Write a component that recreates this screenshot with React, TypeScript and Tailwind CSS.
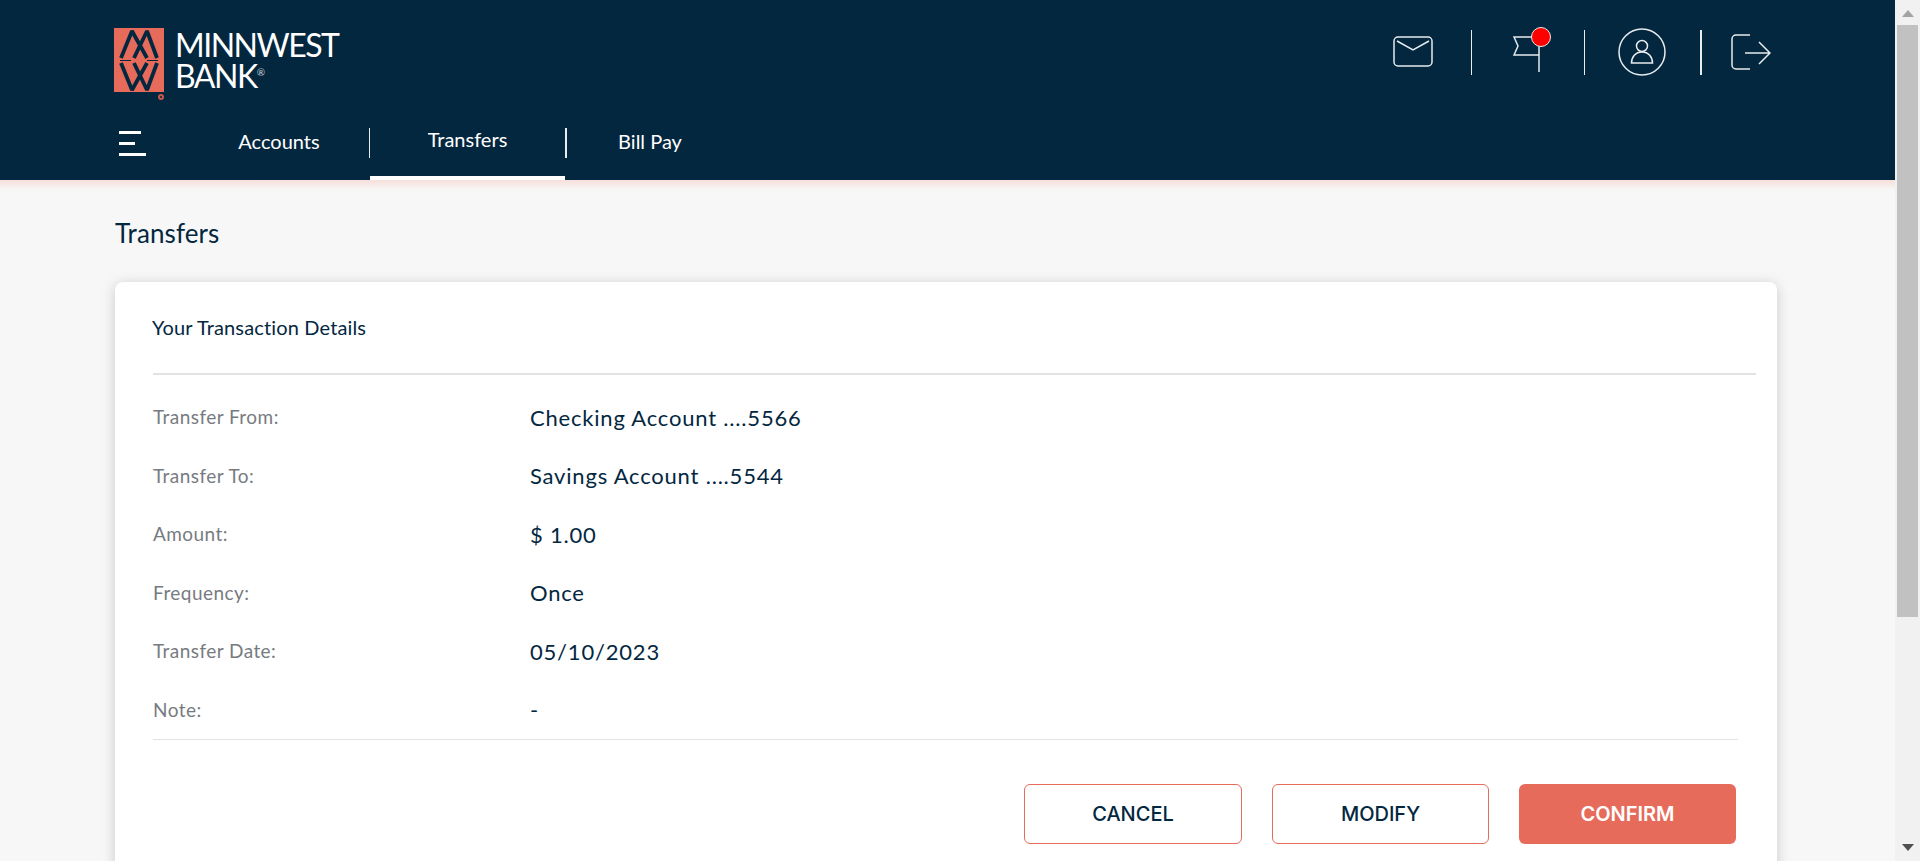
const rows = [
  { label: 'Transfer From:', value: 'Checking Account ....5566' },
  { label: 'Transfer To:', value: 'Savings Account ....5544' },
  { label: 'Amount:', value: '$ 1.00' },
  { label: 'Frequency:', value: 'Once' },
  { label: 'Transfer Date:', value: '05/10/2023' },
  { label: 'Note:', value: '-' },
];

function Logo() {
  return (
    <div className="flex items-start">
      <div className="relative h-16 w-[50px] bg-[#e66b5b]">
        <svg viewBox="0 0 50 64" className="h-16 w-[50px]" fill="none" stroke="#03273f" strokeWidth="3.8" strokeLinejoin="bevel">
          <path d="M7 30 18 3l15 27M43 30 33 3 20 30" />
          <path d="M7 35 18 62l15-27M43 35 33 62 20 35" />
          <path d="M6 32.500h11M33 32.500h11" strokeWidth="1.2" />
        </svg>
        <span className="absolute top-[66px] left-[44px] h-[6px] w-[6px] rounded-full border-2 border-[#c9564a]" />
      </div>
      <div className="ml-[11px] mt-[1px] font-['Lato',sans-serif] text-[32px] leading-[31px] font-normal tracking-[-1.5px] text-white">
        <div>MINNWEST</div>
        <div className="flex items-start">
          BANK
          <span className="text-[10px] leading-[24px] tracking-normal text-[#c9d2d8]">®</span>
        </div>
      </div>
    </div>
  );
}

function TopIcons() {
  return (
    <div className="flex items-center">
      <svg width="41" height="32" viewBox="0 0 41 32" fill="none" stroke="#e8ecee" strokeWidth="1.5">
        <rect x="1" y="1" width="38" height="29" rx="4" />
        <path d="M4 5l16 9 16-9" />
      </svg>
      <div className="ml-[37px] h-[45px] w-px bg-[#e8ecee]" />
      <div className="relative ml-[41px] h-[50px] w-[30px]">
        <svg width="30" height="50" viewBox="0 0 30 50" fill="none" stroke="#e8ecee" strokeWidth="1.5">
          <path d="M26 10H1l4 9-4 9h25M26 10v35" />
        </svg>
        <span className="absolute top-0 left-[18px] h-5 w-5 rounded-full border border-[#e8ecee] bg-[#ff0000]" />
      </div>
      <div className="ml-[41px] h-[45px] w-px bg-[#e8ecee]" />
      <svg className="ml-[33px]" width="48" height="48" viewBox="0 0 48 48" fill="none" stroke="#e8ecee" strokeWidth="1.5">
        <circle cx="24" cy="24" r="23" />
        <circle cx="24" cy="18" r="5.5" />
        <path d="M13.500 35c0-6 4-11 10.500-11s10.500 5 10.500 11z" />
      </svg>
      <div className="ml-[34px] h-[45px] w-[2px] bg-[#e8ecee]" />
      <svg className="ml-[29px]" width="40" height="36" viewBox="0 0 40 36" fill="none" stroke="#e8ecee" strokeWidth="1.5">
        <path d="M19 1H5a4 4 0 0 0-4 4v26a4 4 0 0 0 4 4h14" />
        <path d="M14 19h25M28 8l11 11-11 11" />
      </svg>
    </div>
  );
}

function Header() {
  return (
    <header className="flex h-[180px] flex-col bg-[#03273f] text-white">
      <div className="flex h-[107px] items-start justify-between pt-7 pr-[124px] pl-[114px]">
        <Logo />
        <div className="-mt-[1px]">
          <TopIcons />
        </div>
      </div>
      <nav className="flex h-[73px] text-[20px] leading-none">
        <div className="ml-[119px] flex w-[70px] flex-col gap-2 pt-6">
          <span className="h-[3px] w-[22px] bg-white" />
          <span className="h-[3px] w-4 bg-white" />
          <span className="h-[3px] w-[27px] bg-white" />
        </div>
        <div className="flex h-[73px] w-[180px] items-center justify-center pb-[5px]">Accounts</div>
        <div className="mt-[21px] h-[30px] w-px bg-[#e8ecee]" />
        <div className="flex h-[73px] w-[195px] items-center justify-center border-b-4 border-white pb-[6px]">Transfers</div>
        <div className="mt-[21px] h-[30px] w-[2px] bg-[#e8ecee]" />
        <div className="flex h-[73px] w-[166px] items-center justify-center pb-[5px]">Bill Pay</div>
      </nav>
    </header>
  );
}

function Details() {
  return (
    <section className="ml-[115px] mt-[34px] w-[1662px] rounded-lg bg-white pt-[33px] pb-10 pl-[37px] shadow-[0_2px_14px_rgba(0,0,0,0.18)]">
      <h2 className="text-[20px] leading-6 tracking-[0.15px] text-[#03273f]">Your Transaction Details</h2>
      <div className="ml-px mt-[34px] h-[2px] w-[1603px] bg-[#e2e2e2]" />
      <dl className="ml-px mt-[13px] w-[1585px] border-b border-[#e2e2e2]">
        {rows.map((row) => (
          <div key={row.label} className="flex h-[58.5px] items-center">
            <dt className="w-[377px] text-[19px] tracking-[0.45px] text-[#777b80]">{row.label}</dt>
            <dd className="text-[22px] tracking-[0.8px] text-[#03273f]">{row.value}</dd>
          </div>
        ))}
      </dl>
      <div className="ml-px mt-[44px] flex w-[1583px] justify-end gap-[30px] font-['Inter',sans-serif] text-[20px] font-medium">
        <button className="h-[60px] w-[218px] rounded-md border border-[#e66b5b] text-[#03273f]">CANCEL</button>
        <button className="h-[60px] w-[217px] rounded-md border border-[#e66b5b] text-[#03273f]">MODIFY</button>
        <button className="h-[60px] w-[217px] rounded-md bg-[#e66b5b] font-semibold text-white">CONFIRM</button>
      </div>
    </section>
  );
}

function Scrollbar() {
  return (
    <div className="flex h-full w-[25px] flex-col items-center bg-[#f1f1f1]">
      <svg className="mt-[10px]" width="12" height="7" viewBox="0 0 12 7" fill="#a3a3a3">
        <path d="M6 0l6 7H0z" />
      </svg>
      <div className="mt-2 h-[592px] w-[21px] bg-[#c1c1c1]" />
      <svg className="mt-auto mb-[10px]" width="12" height="7" viewBox="0 0 12 7" fill="#505050">
        <path d="M6 7L0 0h12z" />
      </svg>
    </div>
  );
}

export default function App() {
  return (
    <div className="flex h-[861px] overflow-hidden bg-[#f7f7f7] font-['Lato',sans-serif]">
      <main className="w-[1895px] overflow-hidden">
        <Header />
        <div className="h-[10px] bg-gradient-to-b from-[#f6dfdb] to-[#f7f7f7]" />
        <h1 className="ml-[115px] mt-[28px] text-[26px] leading-[30px] tracking-[0.1px] text-[#03273f]">Transfers</h1>
        <Details />
      </main>
      <Scrollbar />
    </div>
  );
}
